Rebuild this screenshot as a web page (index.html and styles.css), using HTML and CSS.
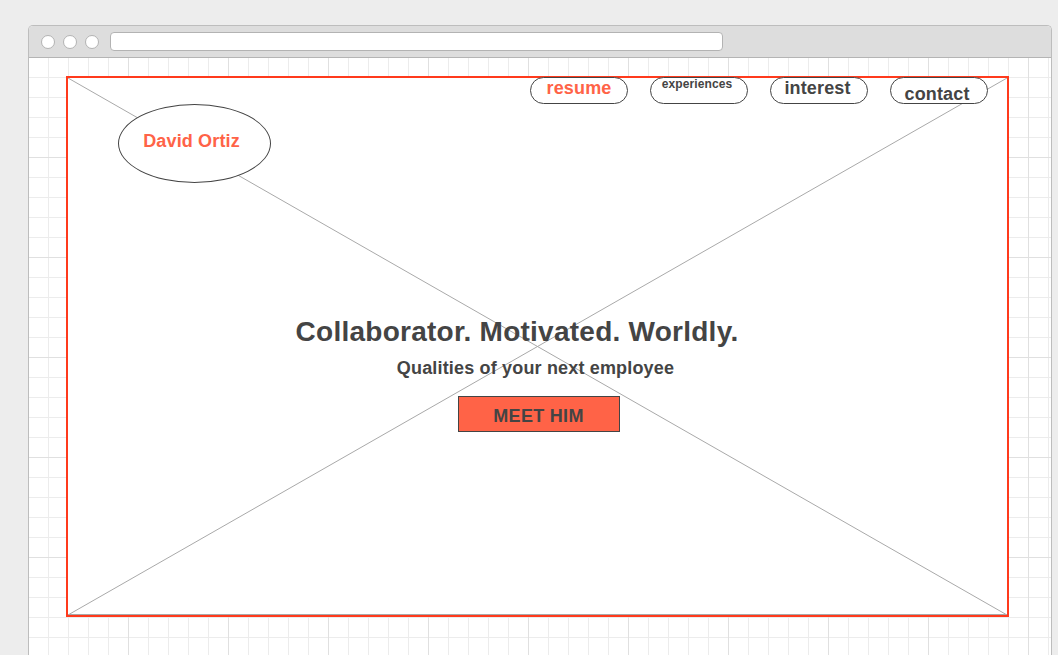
FILE: index.html
```html
<!DOCTYPE html>
<html lang="en">
<head>
<meta charset="utf-8">
<title>David Ortiz</title>
<link rel="stylesheet" href="styles.css">
</head>
<body>
<div class="window">
  <div class="toolbar">
    <span class="dot"></span>
    <span class="dot"></span>
    <span class="dot"></span>
    <div class="address"></div>
  </div>
  <div class="canvas">
    <div class="frame">
      <svg class="placeholder" viewBox="0 0 100 100" preserveAspectRatio="none" aria-hidden="true">
        <line x1="0" y1="0" x2="100" y2="100" vector-effect="non-scaling-stroke"/>
        <line x1="100" y1="0" x2="0" y2="100" vector-effect="non-scaling-stroke"/>
      </svg>
      <header class="header">
        <div class="logo">David Ortiz</div>
        <nav class="nav">
          <a class="pill pill--active">resume</a>
          <a class="pill pill--small">experiences</a>
          <a class="pill pill--mid">interest</a>
          <a class="pill pill--low">contact</a>
        </nav>
      </header>
      <section class="hero">
        <h1 class="hero__title">Collaborator. Motivated. Worldly.</h1>
        <p class="hero__subtitle">Qualities of your next employee</p>
        <button class="hero__button">MEET HIM</button>
      </section>
    </div>
  </div>
</div>
</body>
</html>
```
FILE: styles.css
```css
html, body {
  margin: 0;
  padding: 0;
  overflow: hidden;
  height: 100%;
}

body {
  background: #ededed;
  font-family: "Liberation Sans", Arial, Helvetica, sans-serif;
  color: #444;
}

.window {
  margin: 25px 0 0 28px;
  width: 1024px;
  height: 630px;
  box-sizing: border-box;
  border: 1px solid #bdbdbd;
  border-bottom: 0;
  border-radius: 5px 5px 0 0;
  background: #fff;
  overflow: hidden;
  display: flex;
  flex-direction: column;
}

.toolbar {
  flex: none;
  height: 31px;
  background: #dddddd;
  border-bottom: 1px solid #b4b4b4;
  display: flex;
  align-items: center;
  padding-left: 12px;
  gap: 8px;
}

.dot {
  width: 14px;
  height: 14px;
  box-sizing: border-box;
  border-radius: 50%;
  background: #fff;
  border: 1px solid #b3b3b3;
}

.address {
  margin-left: 3px;
  width: 613px;
  height: 19px;
  box-sizing: border-box;
  background: #fff;
  border: 1px solid #b3b3b3;
  border-radius: 4px;
}

.canvas {
  flex: 1;
  min-height: 0;
  padding: 18px 0 0 37px;
  background-color: #fff;
  background-image:
    linear-gradient(to right, transparent 99px, #e0e0e0 99px),
    linear-gradient(to bottom, transparent 99px, #e0e0e0 99px),
    linear-gradient(to right, transparent 19px, #ececec 19px),
    linear-gradient(to bottom, transparent 19px, #ececec 19px);
  background-size: 100px 100px, 100px 100px, 20px 20px, 20px 20px;
}

.frame {
  position: relative;
  width: 943px;
  height: 541px;
  box-sizing: border-box;
  border: 2px solid #ff3a1c;
  background: #fff;
  box-shadow: inset 0 -1px 0 #a8a8a8;
}

.placeholder {
  position: absolute;
  left: 0;
  top: 0;
  width: 100%;
  height: 100%;
  stroke: #a9a9a9;
  stroke-width: 1;
}

.header {
  position: relative;
  display: flex;
  justify-content: space-between;
  align-items: flex-start;
}

.logo {
  margin: 26px 0 0 50px;
  width: 153px;
  height: 79px;
  box-sizing: border-box;
  border: 1px solid #444;
  border-radius: 50%;
  background: #fff;
  padding: 26px 6px 0 0;
  text-align: center;
  font-weight: 700;
  font-size: 18px;
  line-height: 20px;
  letter-spacing: 0.15px;
  color: #ff6347;
}

.nav {
  display: flex;
  gap: 22px;
  margin: -1px 19px 0 0;
}

.pill {
  width: 98px;
  height: 27px;
  box-sizing: border-box;
  border: 1px solid #444;
  border-radius: 14px;
  background: #fff;
  text-align: center;
  font-weight: 700;
  font-size: 18px;
  line-height: 20px;
  letter-spacing: 0.15px;
  color: #444;
  text-decoration: none;
}

.pill--active {
  color: #ff6347;
}

.pill--small {
  font-size: 12px;
  line-height: 12px;
  letter-spacing: 0.1px;
  padding-right: 4px;
}

.pill--mid {
  padding-right: 3px;
}

.pill--low {
  padding-top: 6px;
  padding-right: 4px;
}

.hero {
  position: relative;
  margin-top: 133px;
  display: flex;
  flex-direction: column;
  align-items: center;
}

.hero__title {
  margin: 0;
  padding-right: 41px;
  font-size: 28px;
  line-height: 32px;
  font-weight: 700;
  letter-spacing: 0.25px;
  color: #444;
}

.hero__subtitle {
  margin: 10px 0 0;
  padding-right: 4px;
  font-size: 18px;
  line-height: 20px;
  font-weight: 700;
  letter-spacing: 0.17px;
  color: #444;
}

.hero__button {
  margin: 18px 0 0 2px;
  width: 162px;
  height: 36px;
  box-sizing: border-box;
  padding: 8.5px 0 0;
  border: 1px solid #444;
  border-radius: 0;
  background: #ff6347;
  font-family: inherit;
  font-size: 18px;
  line-height: 20px;
  font-weight: 700;
  letter-spacing: 0.3px;
  color: #444;
  display: flex;
  justify-content: center;
  align-items: flex-start;
}
```
